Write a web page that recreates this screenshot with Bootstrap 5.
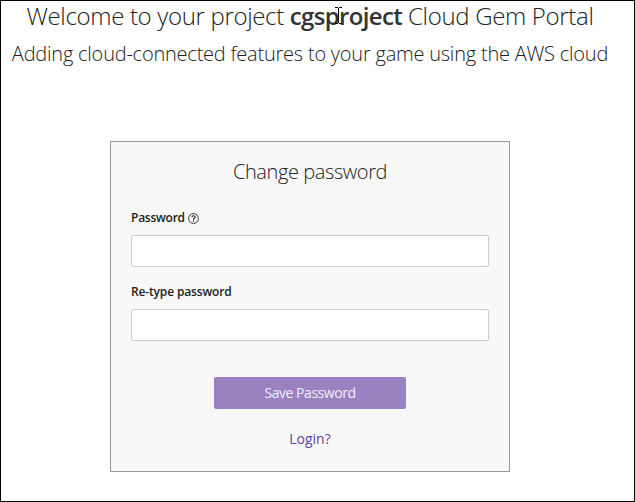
<!DOCTYPE html>
<html lang="en">
<head>
<meta charset="utf-8">
<meta name="viewport" content="width=device-width, initial-scale=1">
<title>Cloud Gem Portal</title>
<link rel="stylesheet" href="https://cdn.jsdelivr.net/npm/bootstrap@5.3.0/dist/css/bootstrap.min.css">
<style>
body { font-family: "Open Sans", "Noto Sans", sans-serif; color: #222; background: #fff; }
.portal { height: 502px; border: 1px solid #000; padding-right: 15px; overflow: hidden; }
.portal-title { font-size: 24px; line-height: 30px; font-weight: 300; margin: 0; letter-spacing: -.33px; }
.portal-title strong { font-weight: 600; color: #333; letter-spacing: -.65px; }
.title-end { letter-spacing: -.32px; }
.portal-sub { font-size: 20px; line-height: 28px; font-weight: 300; margin: 9px 0 0; letter-spacing: -.22px; }
.login-box { width: 400px; height: 331px; margin-top: 73px; padding: 15px 20px 0; background: #f8f8f8; border: 1px solid #999; }
.login-head { font-size: 20px; line-height: 30px; font-weight: 300; margin: 0 0 22px; letter-spacing: -.4px; }
.field-label { font-size: 12px; line-height: 18px; font-weight: 600; margin: 0 0 8px; letter-spacing: -.15px; }
.label-tip { letter-spacing: -.25px; gap: 3px; }
.field-box { height: 32px; border: 1px solid #ccc; border-radius: 2px; padding: 4px 8px; }
.btn-save { width: 192px; height: 32px; margin-top: 36px; padding: 0; line-height: 32px; font-size: 14px; letter-spacing: -.46px; border: 0; border-radius: 2px; background: #9981c2; color: #f2eef8; }
.login-link { margin-top: 20px; font-size: 14px; line-height: 20px; color: #6441a5; }
.text-cursor { left: 44px; top: 8px; }
</style>
<script src="https://cdn.jsdelivr.net/npm/bootstrap@5.3.0/dist/js/bootstrap.bundle.min.js"></script>
</head>
<body>
<main class="portal d-flex flex-column align-items-center text-nowrap">
  <h1 class="portal-title">Welcome to your project <strong class="position-relative">cgsproject<svg class="text-cursor position-absolute" width="9" height="17" viewBox="0 0 9 17" fill="none" stroke="#000" shape-rendering="crispEdges"><path d="M1 .5h3M5 .5h3M4.500 1v15M1 16.500h3M5 16.500h3"/></svg></strong> <span class="title-end">Cloud Gem Portal</span></h1>
  <p class="portal-sub">Adding cloud-connected features to your game using the AWS cloud</p>
  <form class="login-box d-flex flex-column">
    <h2 class="login-head text-center">Change password</h2>
    <div>
      <label class="field-label label-tip d-flex align-items-center" for="pw"><span>Password</span>
        <svg width="11" height="11" viewBox="0 0 11 11" fill="none" stroke="#222"><circle cx="5.500" cy="5.500" r="4.900" stroke-width=".9"/><path d="M3.900 4.300C4 2.200 7.200 2.300 7.100 4.200C7.100 5.300 5.500 5.200 5.500 6.700M5.500 7.500v1.200" stroke-width="1.200"/></svg>
      </label>
      <input id="pw" type="password" class="form-control field-box">
    </div>
    <div class="mt-3">
      <label class="field-label d-block" for="pw2">Re-type password</label>
      <input id="pw2" type="password" class="form-control field-box">
    </div>
    <button type="button" class="btn btn-save align-self-center">Save Password</button>
    <a href="#" class="login-link text-decoration-none align-self-center">Login?</a>
  </form>
</main>
</body>
</html>
